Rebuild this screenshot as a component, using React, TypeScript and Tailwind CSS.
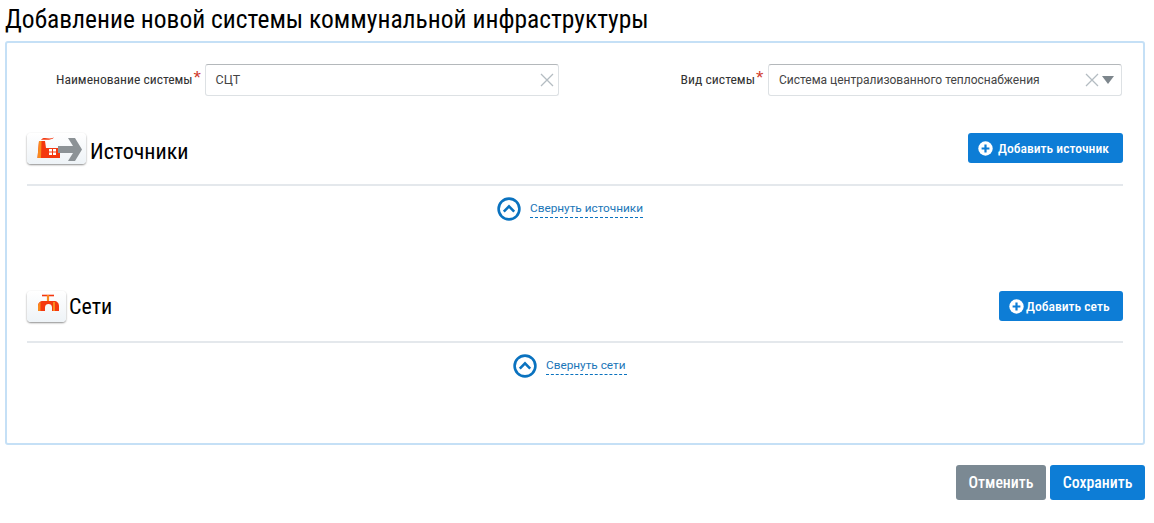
import React from "react";

const Cond = "[font-family:Roboto,sans-serif] [font-stretch:75%]";

function Clear({ className = "" }: { className?: string }) {
  return (
    <svg width="14" height="14" viewBox="0 0 14 14" className={className}>
      <path d="M1 1 L13 13 M13 1 L1 13" stroke="#b4bcc2" strokeWidth="1.3" fill="none" />
    </svg>
  );
}

function Req() {
  return (
    <span className="ml-[1px] w-[9px] text-[#d0392b] text-[19px] leading-[19px] h-[19px] self-start mt-[4px] [font-family:'Liberation_Sans',sans-serif]">
      *
    </span>
  );
}

function Plus() {
  return (
    <svg width="15" height="15" viewBox="0 0 15 15" className="shrink-0">
      <circle cx="7.5" cy="7.5" r="7.2" fill="#fff" />
      <path d="M7.5 3.6 V11.4 M3.6 7.5 H11.4" stroke="#0d7dd6" strokeWidth="2.2" />
    </svg>
  );
}

function Factory() {
  return (
    <svg width="59" height="31" viewBox="0 0 59 31">
      <path d="M12 8 H18 L19 15 H33 V25 H10.5 Z" fill="#f4380f" />
      <path d="M12 8 H14.5 L14 25 H10.5 Z" fill="#f98a1f" />
      <path d="M14 7 C17 3 21 7 27 4.5 C24 8 18 6 14 7 Z" fill="#f4380f" />
      <rect x="21" y="15" width="9" height="8" fill="#f4380f" />
      <path d="M22 16 h3 v2.5 h-3 z M26 16 h3 v2.5 h-3 z M22 19.5 h3 v2.5 h-3 z M26 19.5 h3 v2.5 h-3 z" fill="#fff" />
      <path d="M31 13 H46 L41 5 H48 L55 16.5 L48 28 H41 L46 20 H31 Z" fill="#8c9296" />
    </svg>
  );
}

function Tap() {
  return (
    <svg width="39" height="31" viewBox="0 0 39 31">
      <path d="M15 4.5 H27" stroke="#f4380f" strokeWidth="1.6" />
      <path d="M21 4 V11" stroke="#f98a1f" strokeWidth="2.2" />
      <path d="M11 20 V15 C11 12 13 10 16 10 H27 C30 10 32 12 32 15 V20 H25 V16.5 C25 14 23.5 13 21.5 13 C19.5 13 18 14 18 16.5 V20 Z" fill="#f4380f" />
      <path d="M11 20 V15 C11 13 12 12 13.5 11 V20 Z M26 11 H28 V20 H26 Z" fill="#f98a1f" />
    </svg>
  );
}

function IconBox({ w, children }: { w: string; children: React.ReactNode }) {
  return (
    <div className={`${w} h-[31px] rounded-[4px] bg-gradient-to-b from-white to-[#eef3f7] shadow-[0_1px_2px_rgba(0,0,0,0.45)] flex items-center justify-center shrink-0`}>
      {children}
    </div>
  );
}

function Collapse({ label, w }: { label: string; w: string }) {
  return (
    <div className="flex items-center justify-center gap-[9px] h-[46px] pr-[10px]">
      <svg width="24" height="24" viewBox="0 0 24 24">
        <circle cx="12" cy="12" r="10.4" fill="none" stroke="#0a72bf" strokeWidth="2.6" />
        <path d="M6.8 14.6 L12 9.4 L17.2 14.6" fill="none" stroke="#0a72bf" strokeWidth="2.6" />
      </svg>
      <span className={`${w} mb-[2px] text-[11.8px] leading-[18px] text-[#1b76b8] border-b border-dashed border-[#0a72bf] [font-family:Roboto,sans-serif] whitespace-nowrap`}>
        {label}
      </span>
    </div>
  );
}

function Section({ icon, boxW, title, btn, btnW, gap, collapse, cw, h, pt, rule, ml }: any) {
  return (
    <section className={h}>
      <div className="flex items-center justify-between h-[31px]">
        <div className="flex items-center">
          <IconBox w={boxW}>{icon}</IconBox>
          <h2 className={`text-[22px] text-black ${Cond} ${pt} ${ml}`}>{title}</h2>
        </div>
        <button className={`${btnW} h-[30px] -mt-[1px] rounded-[3px] bg-[#0d7dd6] text-white flex items-center justify-start pl-[10px] ${gap} text-[13.6px] font-medium ${Cond} whitespace-nowrap`}>
          <Plus />
          {btn}
        </button>
      </div>
      <div className={`${rule} h-[2px] bg-[#e4e8ec]`} />
      <Collapse label={collapse} w={cw} />
    </section>
  );
}

export default function App() {
  return (
    <div className="w-[1154px] h-[523px] bg-white overflow-hidden [font-family:Roboto,sans-serif]">
      <h1 className={`h-[41px] pl-[5px] pt-[3px] text-[25.5px] leading-[32px] text-black ${Cond} whitespace-nowrap`}>
        Добавление новой системы коммунальной инфраструктуры
      </h1>
      <div className="ml-[5px] mr-[9px] h-[404px] border-2 border-[#c5e0f6] rounded-[3px] px-[20px] pt-[21px]">
        <div className="flex justify-between h-[32px]">
          <div className="flex items-center pl-[29px]">
            <label className={`text-[13.6px] text-[#333] ${Cond} whitespace-nowrap -mt-[1px]`}>Наименование системы</label>
            <Req />
            <div className="ml-[2px] w-[354px] h-[32px] border border-[#dde1e4] border-t-[#b4b8bb] rounded-[3px] flex items-center justify-between pl-[10px] pr-[4px] text-[12.5px] text-[#444]">
              СЦТ
              <Clear />
            </div>
          </div>
          <div className="flex items-center mr-[1px]">
            <label className={`text-[13.7px] text-[#333] ${Cond} whitespace-nowrap -mt-[1px]`}>Вид системы</label>
            <Req />
            <div className="ml-[3px] w-[354px] h-[32px] border border-[#dde1e4] border-t-[#b4b8bb] rounded-[3px] flex items-center justify-between pl-[10px] pr-[7px] text-[12px] text-[#444]">
              <span className="whitespace-nowrap">Система централизованного теплоснабжения</span>
              <div className="flex items-center gap-[3px]">
                <Clear />
                <svg width="12" height="8" viewBox="0 0 12 8"><path d="M0 0 H12 L6 8 Z" fill="#7d868c" /></svg>
              </div>
            </div>
          </div>
        </div>
        <div className="mt-[37px]">
          <Section h="h-[158px]" icon={<Factory />} boxW="w-[59px]" title="Источники" btn="Добавить источник" btnW="w-[155px]" gap="gap-[5px]" collapse="Свернуть источники" cw="w-[113px]" pt="pt-[6px]" rule="mt-[20px]" ml="ml-[4px]" />
          <Section h="" icon={<Tap />} boxW="w-[39px]" title="Сети" btn="Добавить сеть" btnW="w-[124px]" gap="gap-[2px]" collapse="Свернуть сети" cw="w-[81px]" pt="pt-[0px]" rule="mt-[19px]" ml="ml-[3px]" />
        </div>
      </div>
      <div className="mx-[9px] mt-[20px] flex justify-end gap-[4px]">
        <button className={`w-[90px] h-[35px] rounded-[3px] bg-[#7b8993] text-white text-[15.8px] font-medium ${Cond}`}>Отменить</button>
        <button className={`w-[95px] h-[35px] rounded-[3px] bg-[#0d7dd6] text-white text-[15.8px] font-medium ${Cond}`}>Сохранить</button>
      </div>
    </div>
  );
}
